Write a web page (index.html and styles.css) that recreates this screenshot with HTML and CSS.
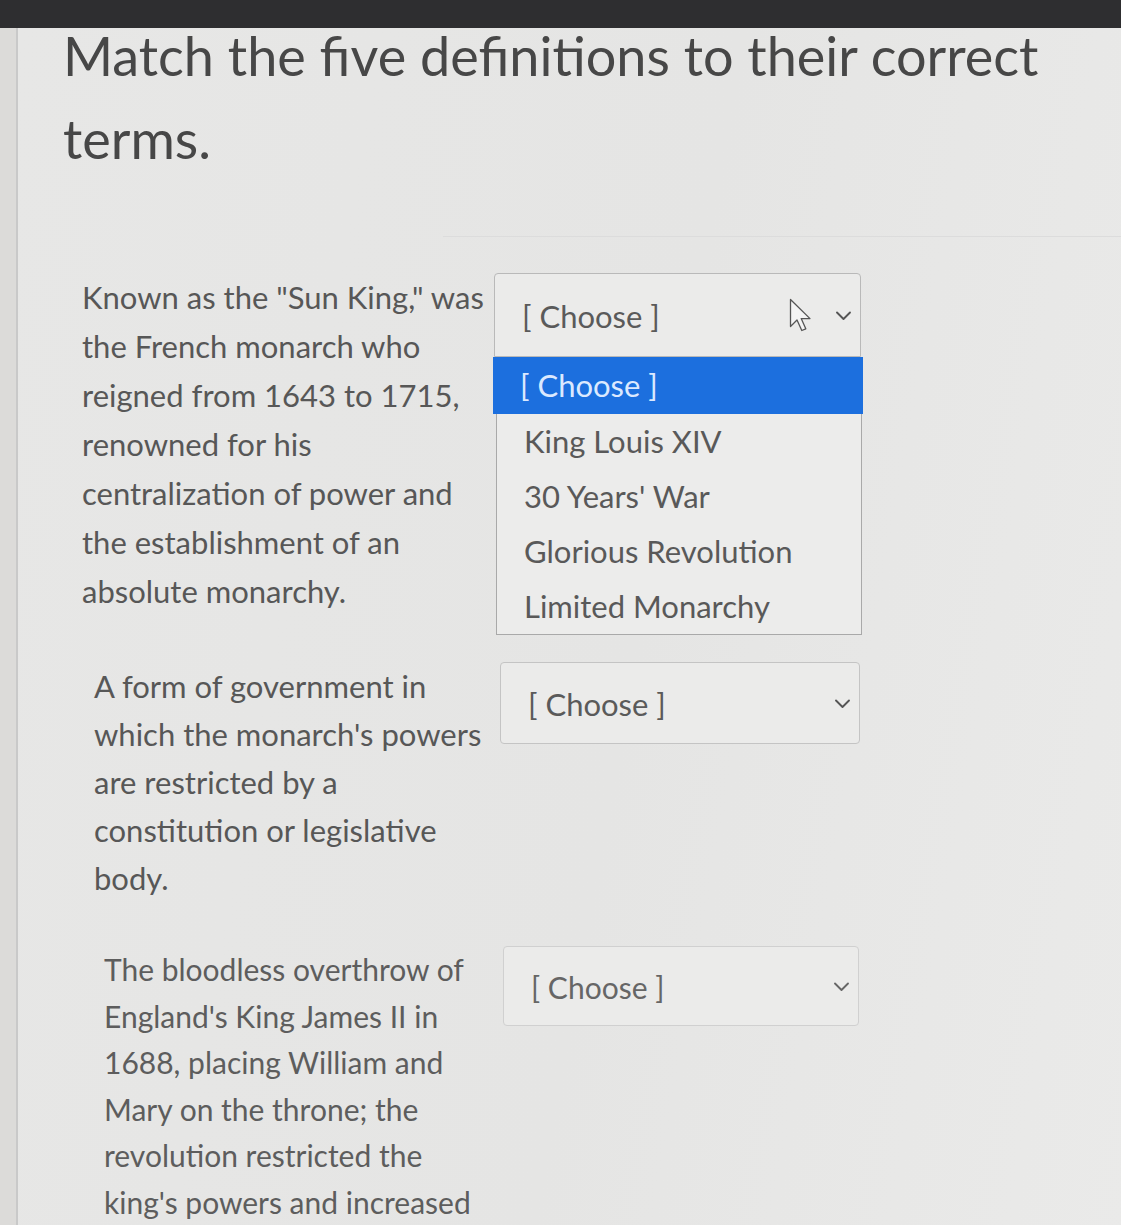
FILE: index.html
```html
<!DOCTYPE html>
<html lang="en">
<head>
<meta charset="utf-8">
<title>Matching question</title>
<link rel="stylesheet" href="styles.css">
</head>
<body>
<div class="topbar"></div>
<div class="page">
  <div class="content">
    <h1 class="title">Match the five definitions to their correct terms.</h1>
    <div class="rule"></div>
    <div class="q q1">
      <p class="def">Known as the "Sun King," was the French monarch who reigned from 1643 to 1715, renowned for his centralization of power and the establishment of an absolute monarchy.</p>
      <div class="selwrap">
        <div class="select open">
          <span class="val">[ Choose ]</span>
          <svg class="cursor" width="28" height="38" viewBox="0 0 28 38"><path d="M1.5 1.5 L1.5 28.5 L8 22 L12.8 32.5 L16.8 30.8 L12.2 20.6 L21 20.6 Z" fill="#f4f4f4" stroke="#555" stroke-width="1.3" stroke-linejoin="round"/></svg>
          <svg class="chev" width="17" height="11" viewBox="0 0 17 11"><path d="M2 2.5 L8.5 9 L15 2.5" fill="none" stroke="#555" stroke-width="1.9" stroke-linecap="round" stroke-linejoin="round"/></svg>
        </div>
        <ul class="menu">
          <li class="opt hl">[ Choose ]</li>
          <li class="opt">King Louis XIV</li>
          <li class="opt">30 Years' War</li>
          <li class="opt">Glorious Revolution</li>
          <li class="opt">Limited Monarchy</li>
        </ul>
      </div>
    </div>
    <div class="q q2">
      <p class="def">A form of government in which the monarch's powers are restricted by a constitution or legislative body.</p>
      <div class="selwrap">
        <div class="select">
          <span class="val">[ Choose ]</span>
          <svg class="chev" width="17" height="11" viewBox="0 0 17 11"><path d="M2 2.5 L8.5 9 L15 2.5" fill="none" stroke="#555" stroke-width="1.9" stroke-linecap="round" stroke-linejoin="round"/></svg>
        </div>
      </div>
    </div>
    <div class="q q3">
      <p class="def">The bloodless overthrow of England's King James II in 1688, placing William and Mary on the throne; the revolution restricted the king's powers and increased</p>
      <div class="selwrap">
        <div class="select">
          <span class="val">[ Choose ]</span>
          <svg class="chev" width="17" height="11" viewBox="0 0 17 11"><path d="M2 2.5 L8.5 9 L15 2.5" fill="none" stroke="#666" stroke-width="1.9" stroke-linecap="round" stroke-linejoin="round"/></svg>
        </div>
      </div>
    </div>
  </div>
</div>
</body>
</html>
```

FILE: styles.css
```css
html, body {
  margin: 0;
  padding: 0;
  height: 100%;
  overflow: hidden;
}
body {
  font-family: Lato, "Open Sans", sans-serif;
  background: #dcdbd9;
  color: #555;
}
.topbar {
  position: relative;
  z-index: 2;
  height: 28px;
  background: #2e2e30;
}
.page {
  margin-left: 16px;
  border-left: 2px solid #c9c9c9;
  background: linear-gradient(100deg, #e7e7e6 0%, #e5e5e4 55%, #eaeae9 100%);
  height: 1260px;
}
.content {
  padding-left: 45px;
}
.title {
  position: relative;
  z-index: 1;
  margin: -14px 0 0 0;
  font-weight: 400;
  font-size: 54px;
  line-height: 83px;
  color: #474747;
  width: 1030px;
}
.rule {
  height: 1px;
  background: #dcdcdc;
  margin-top: 56px;
  margin-left: 380px;
}
.q {
  display: flex;
  align-items: flex-start;
}
.def {
  margin: 0;
  font-size: 31px;
  line-height: 49px;
  color: #575757;
}
.q1 { margin-top: 36px; padding-left: 19px; }
.q1 .def { width: 412px; }
.q1 .selwrap { z-index: 5; }
.q2 { margin-top: 46px; padding-left: 31px; }
.q2 .def { width: 395px; line-height: 48px; }
.q2 .selwrap { margin-left: 11px; }
.q3 { margin-top: 44px; padding-left: 41px; }
.q3 .def { width: 385px; font-size: 30px; line-height: 46.5px; color: #5d5d5d; }
.q3 .selwrap { margin-left: 14px; }
.selwrap {
  position: relative;
}
.select {
  box-sizing: border-box;
  width: 367px;
  height: 84px;
  border: 1.5px solid #c4c4c4;
  border-radius: 4px;
  background: #ebebea;
  display: flex;
  align-items: center;
  padding-left: 27px;
  padding-right: 8px;
  position: relative;
}
.q2 .select { width: 360px; height: 82px; }
.q3 .select { width: 356px; height: 80px; border-color: #d0d0d0; }
.q1 .select { border-radius: 4px 4px 0 0; border-color: #b9b9b9; }
.val {
  font-size: 31px;
  color: #5a5a5a;
  flex: 1;
  margin-top: 2px;
}
.q3 .val { font-size: 30px; color: #666; }
.cursor {
  position: absolute;
  left: 294px;
  top: 24px;
}
.menu {
  position: absolute;
  left: 2px;
  top: 84px;
  width: 366px;
  box-sizing: border-box;
  margin: 0;
  padding: 0;
  list-style: none;
  background: #ececeb;
  border: 1.5px solid #a9a9a9;
  border-top: none;
}
.opt {
  height: 55px;
  line-height: 55px;
  padding-left: 27px;
  font-size: 31px;
  color: #595959;
}
.opt.hl {
  height: 57px;
  line-height: 57px;
  background: #1c6fde;
  color: #dbe9ff;
  padding-left: 27px;
  margin-left: -4px;
  margin-right: -1.5px;
}
```
